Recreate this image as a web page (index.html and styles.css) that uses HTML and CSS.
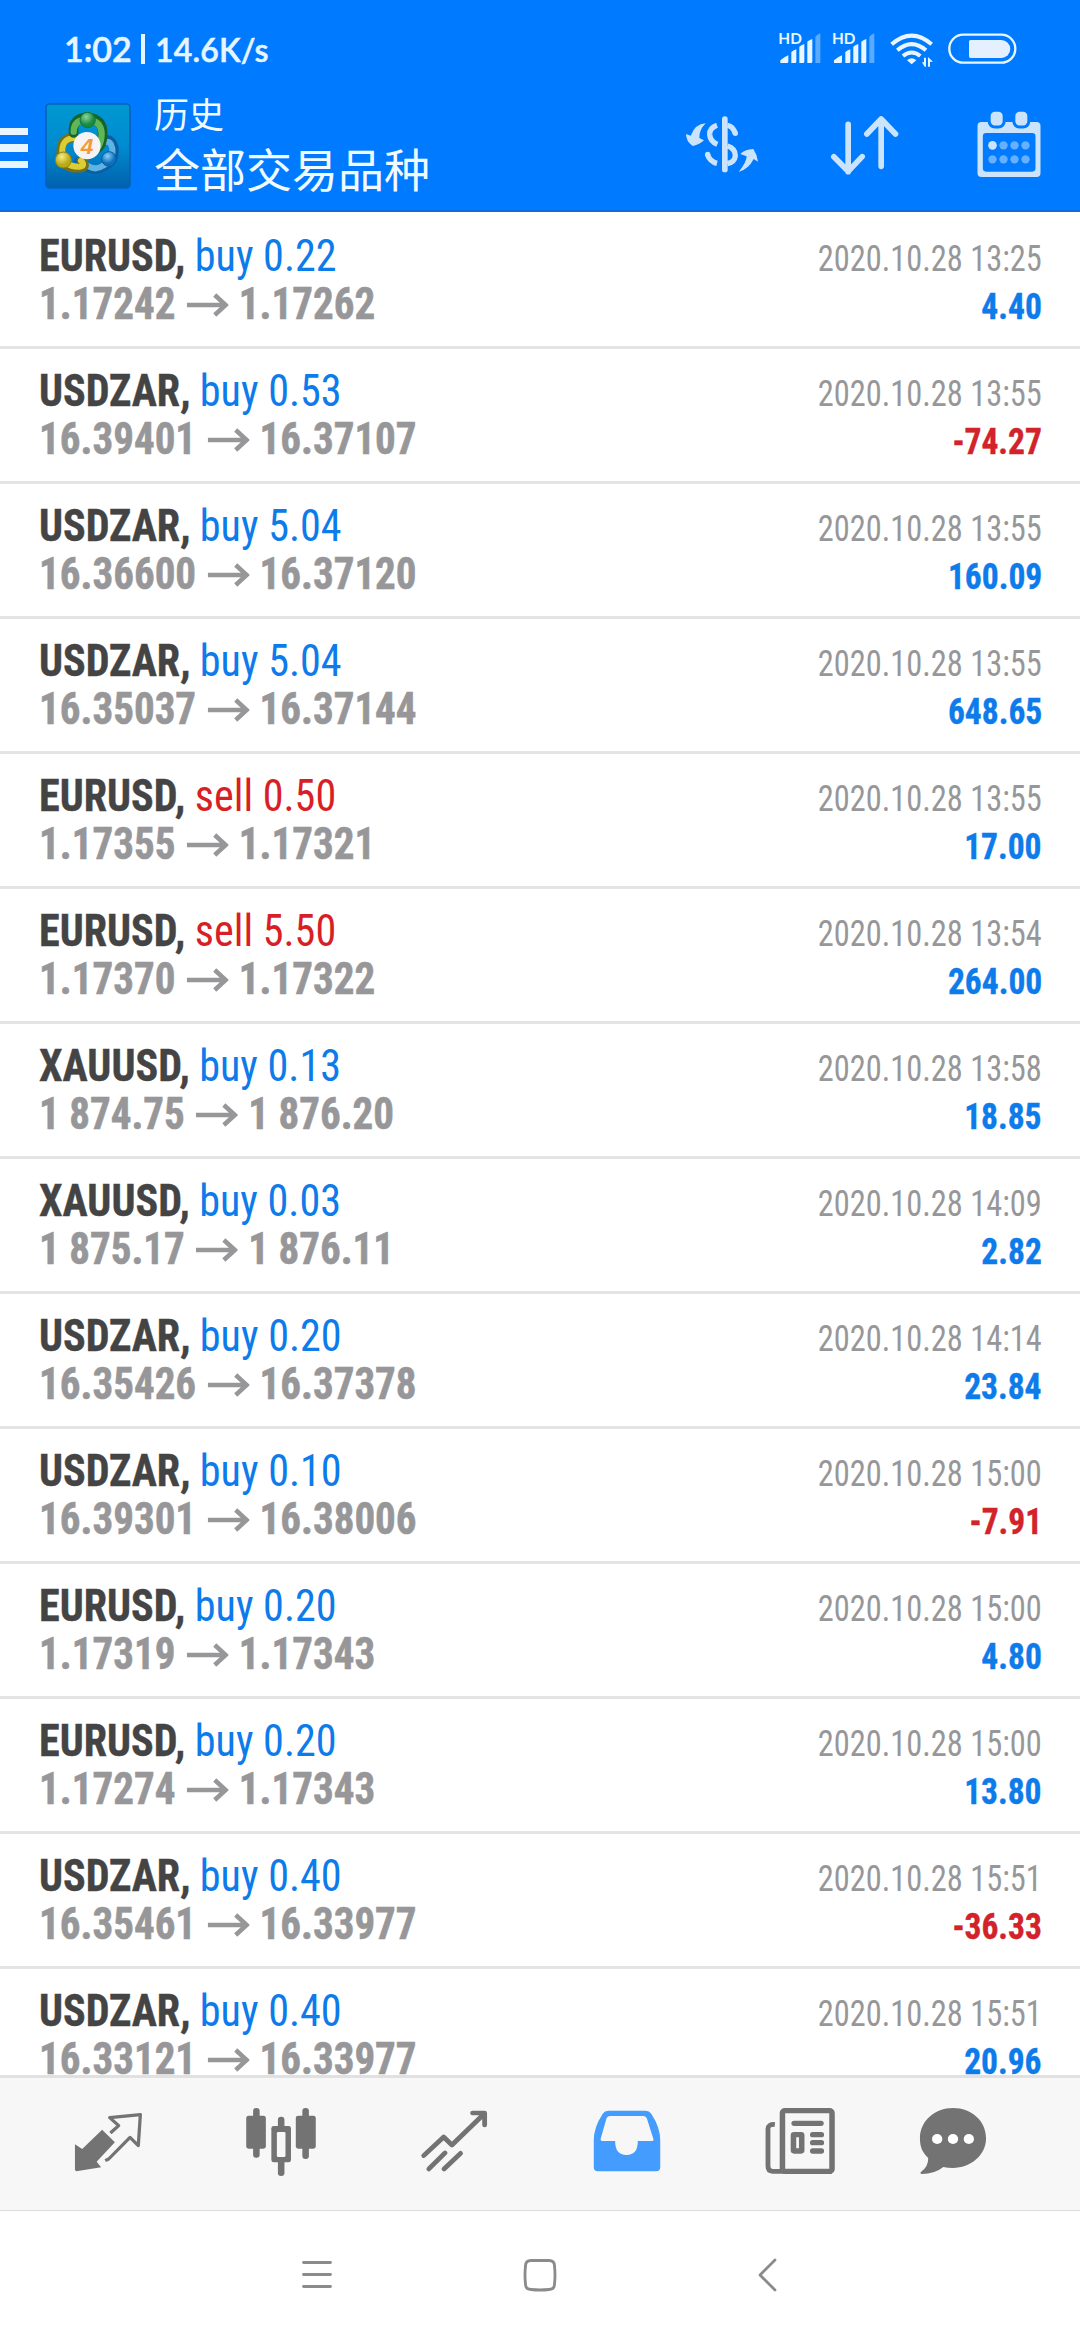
FILE: index.html
```html
<!DOCTYPE html>
<html lang="zh-CN">
<head>
<meta charset="utf-8">
<title>历史</title>
<link rel="stylesheet" href="styles.css">
</head>
<body>
<div class="app">
  <header class="top">
    <div class="status">
      <div class="status-text"><span class="clock">1:02</span><i class="bar"></i><span class="speed">14.6K/s</span></div>
      <svg class="status-icons" viewBox="350 90 724 120" fill="#eaf6ff">
        <text class="hd" x="354" y="132">HD</text>
        <path d="M360 189v-8q9-9 24-15v19q0 4-4 4zM393 189v-33q5-5 15-8v37q0 4-4 4zM417 189v-49q5-5 15-8v53q0 4-4 4zM441 189v-64q5-5 15-8v68q0 4-4 4z"/>
        <path d="M465 189v-79q5-6 15-10v89z" fill="#5aaaff"/>
        <text class="hd" x="515" y="132">HD</text>
        <path d="M521 189v-8q9-9 24-15v19q0 4-4 4zM555 189v-33q5-5 15-8v37q0 4-4 4zM579 189v-49q5-5 15-8v53q0 4-4 4zM603 189v-64q5-5 15-8v68q0 4-4 4z"/>
        <path d="M627 189v-79q5-6 15-10v89z" fill="#5aaaff"/>
        <g fill="none" stroke="#eaf6ff" stroke-width="12">
          <path d="M694 133Q754 81 814 133M711 151Q754 114 797 151M728 168Q754 147 780 168"/>
        </g>
        <path d="M740 181q14-13 28 0l-14 12zM793 200l-8-13h6v-14h6v27zM803 200v-29l15 14h-9v15z"/>
        <rect x="867" y="104" width="198" height="84" rx="42" fill="none" stroke="#eaf6ff" stroke-width="7"/>
        <path d="M931 120h92a27 27 0 0 1 0 54h-92q-5 0-5-5v-44q0-5 5-5z" fill="#e5f0ff"/>
      </svg>
    </div>
    <div class="toolbar">
      <div class="menu"><i></i><i></i><i></i></div>
      <svg class="logo" viewBox="46 40 258 258">
        <defs>
          <linearGradient id="bg" x1="0" y1="0" x2="0" y2="1"><stop offset="0" stop-color="#0098d2"/><stop offset=".5" stop-color="#008bd0"/><stop offset="1" stop-color="#0061ad"/></linearGradient>
          <radialGradient id="gr" cx=".4" cy=".3"><stop offset="0" stop-color="#8ed69a"/><stop offset="1" stop-color="#168b42"/></radialGradient>
          <radialGradient id="ye" cx=".4" cy=".3"><stop offset="0" stop-color="#f7ee83"/><stop offset="1" stop-color="#b9aa16"/></radialGradient>
          <radialGradient id="bl" cx=".4" cy=".3"><stop offset="0" stop-color="#8bd0f5"/><stop offset="1" stop-color="#0b70bd"/></radialGradient>
        </defs>
        <rect x="49" y="43" width="252" height="252" rx="10" fill="url(#bg)" stroke="#0662ba" stroke-width="5"/>
        <g fill="none" stroke-linecap="round">
          <path d="M147 215Q190 254 222 232Q257 218 254 177Q248 145 226 150" stroke="#0b5f9f" stroke-width="26"/>
          <path d="M153 211Q190 250 220 228Q252 213 248 176Q243 152 228 157" stroke="#5fb4e5" stroke-width="18"/>
          <path d="M134 144Q91 143 94 192Q99 239 151 235Q176 231 154 213" stroke="#766f14" stroke-width="27"/>
          <path d="M134 145Q95 146 98 191Q105 234 151 231Q168 228 154 213" stroke="#dccd35" stroke-width="18"/>
          <path d="M132 130Q127 85 172 83Q219 88 219 130Q219 168 203 176" stroke="#176329" stroke-width="29"/>
          <path d="M132 126Q132 91 172 89Q213 92 216 130Q216 155 206 171" stroke="#5db758" stroke-width="19"/>
        </g>
        <circle cx="174" cy="91" r="23" fill="url(#gr)" stroke="#17733a" stroke-width="3"/>
        <circle cx="101" cy="211" r="24" fill="url(#ye)" stroke="#8d8316" stroke-width="3"/>
        <circle cx="238" cy="208" r="22" fill="url(#bl)" stroke="#105a9c" stroke-width="3"/>
        <circle cx="172" cy="168" r="41" fill="#f5f3f5"/>
        <text class="four" x="172" y="193" text-anchor="middle">4</text>
      </svg>
      <div class="titles"><div class="title-small">历史</div><div class="title-big">全部交易品种</div></div>
      <div class="actions">
        <svg viewBox="42 291 288 288" fill="#cce4fb">
          <path d="M137 370Q105 372 92 407L78 402Q78 424 98 438Q120 433 132 421L118 414Q117 390 137 370zM236 516Q260 486 260 469L241 462Q253 448 280 447Q291 463 294 485L281 477Q266 507 236 516z"/>
          <rect x="186" y="349" width="17" height="168" rx="8"/>
          <path d="M171 376Q148 384 149 404Q151 424 172 433M202 376Q218 378 226 400M202 438Q226 445 226 467Q224 486 202 491M142 463Q150 485 171 490" fill="none" stroke="#cce4fb" stroke-width="16"/>
          <circle cx="226" cy="400" r="8"/><circle cx="143" cy="463" r="8"/>
        </svg>
        <svg viewBox="472.500 291 288 288" fill="none" stroke="#cce4fb" stroke-width="17" stroke-linecap="round" stroke-linejoin="round"><path d="M566 373V515M523 470L566 514L608 470M665 499V357M622 402L665 357L708 402"/></svg>
        <svg viewBox="901.500 291 288 288" fill="#cce4fb">
          <path fill-rule="evenodd" d="M963 366H1128Q1140 366 1140 378V519Q1140 531 1128 531H963Q951 531 951 519V378Q951 366 963 366zM977 399Q967 399 967 409V505Q967 515 977 515H1115Q1125 515 1125 505V409Q1125 399 1115 399z"/>
          <g stroke="#007bff" stroke-width="9"><rect x="986" y="331" width="45" height="50" rx="17"/><rect x="1060" y="331" width="45" height="50" rx="17"/></g>
          <circle cx="996" cy="436" r="13"/>
          <g fill="#66b0ff"><circle cx="1029" cy="436" r="12.500"/><circle cx="1062" cy="436" r="12.500"/><circle cx="1095" cy="436" r="12.500"/><circle cx="996" cy="478" r="12.500"/><circle cx="1029" cy="478" r="12.500"/><circle cx="1062" cy="478" r="12.500"/><circle cx="1095" cy="478" r="12.500"/></g>
        </svg>
      </div>
    </div>
  </header>
  <main class="list" id="list"></main>
  <nav class="tabs">
    <svg preserveAspectRatio="none" viewBox="192 183 244 244" fill="#737373"><path d="M297 269L334 307L281 365L294 382L222 394L218 390V313L239 327z"/><path d="M321 279L345 257L319 233L408 224L402 317L378 292L316 357L306 362" fill="none" stroke="#737373" stroke-width="9.500" stroke-linejoin="round"/></svg>
    <svg preserveAspectRatio="none" viewBox="694 183 244 244" fill="#737373"><rect x="735" y="204" width="19" height="149" rx="9"/><rect x="715" y="227" width="57" height="99" rx="7"/><rect x="878" y="204" width="19" height="153" rx="9"/><rect x="859" y="227" width="58" height="99" rx="7"/><rect x="807" y="230" width="19" height="178" rx="9"/><rect x="788" y="258" width="57" height="109" rx="7"/><rect x="804" y="276" width="25" height="75" rx="4" fill="#f7f7f7"/></svg>
    <svg preserveAspectRatio="none" viewBox="1196 183 244 244" fill="none" stroke="#737373" stroke-width="14" stroke-linecap="round" stroke-linejoin="round"><path d="M1230 347L1288 291L1312 315L1405 222M1372 219H1407V255M1245 387L1292 339M1289 387L1337 340"/></svg>
    <svg preserveAspectRatio="none" viewBox="132.500 183 244 244"><path fill="#459cff" fill-rule="evenodd" d="M200 212H309Q319 212 325 221Q351 262 351 300V382Q351 394 339 394H170Q158 394 158 382V300Q158 262 184 221Q190 212 200 212zM206 228Q198 228 195 235L178 296Q177 303 184 303H220Q220 345 253 345Q286 345 286 303H326Q333 303 331 296L312 235Q309 228 301 228z"/></svg>
    <svg preserveAspectRatio="none" viewBox="635 183 244 244" fill="none" stroke="#737373" stroke-width="16"><rect x="706" y="212" width="144" height="182" rx="7"/><path d="M850 394H677Q664 394 664 379V267Q664 252 684 253" stroke-width="14"/><path d="M740 250H818M794 284H819M794 308H819M794 333H819" stroke-linecap="round"/><rect x="738" y="284" width="24" height="49" rx="2"/></svg>
    <svg preserveAspectRatio="none" viewBox="1077 183 244 244" fill="#737373"><path d="M1199 204C1253 204 1295 243 1295 295C1295 347 1249 384 1199 384Q1183 384 1171 381Q1146 402 1108 402Q1103 402 1105 397Q1128 380 1127 354C1109 337 1103 319 1103 295C1103 243 1146 204 1199 204z"/><g fill="#fff"><circle cx="1153" cy="297" r="15"/><circle cx="1199" cy="297" r="15"/><circle cx="1245" cy="297" r="15"/></g></svg>
  </nav>
  <footer class="system">
    <svg viewBox="0 0 36 36"><path d="M4.500 5.500H31.500M4.500 17.500H31.500M4.500 29.500H31.500"/></svg>
    <svg viewBox="0 0 36 36"><path d="M9 3.500H27Q32.500 3.500 32.500 9Q33.500 18 32.500 27Q32.500 32.500 27 32.500Q18 33.500 9 32.500Q3.500 32.500 3.500 27Q2.500 18 3.500 9Q3.500 3.500 9 3.500z"/></svg>
    <svg viewBox="0 0 36 36"><path d="M26 3L11 18L26 33"/></svg>
  </footer>
</div>
<script src="app.js"></script>
</body>
</html>
```
FILE: app.js
```js
const deals = [
  ['EURUSD', 'buy', '0.22', '1.17242', '1.17262', '13:25', '4.40'],
  ['USDZAR', 'buy', '0.53', '16.39401', '16.37107', '13:55', '-74.27'],
  ['USDZAR', 'buy', '5.04', '16.36600', '16.37120', '13:55', '160.09'],
  ['USDZAR', 'buy', '5.04', '16.35037', '16.37144', '13:55', '648.65'],
  ['EURUSD', 'sell', '0.50', '1.17355', '1.17321', '13:55', '17.00'],
  ['EURUSD', 'sell', '5.50', '1.17370', '1.17322', '13:54', '264.00'],
  ['XAUUSD', 'buy', '0.13', '1 874.75', '1 876.20', '13:58', '18.85'],
  ['XAUUSD', 'buy', '0.03', '1 875.17', '1 876.11', '14:09', '2.82'],
  ['USDZAR', 'buy', '0.20', '16.35426', '16.37378', '14:14', '23.84'],
  ['USDZAR', 'buy', '0.10', '16.39301', '16.38006', '15:00', '-7.91'],
  ['EURUSD', 'buy', '0.20', '1.17319', '1.17343', '15:00', '4.80'],
  ['EURUSD', 'buy', '0.20', '1.17274', '1.17343', '15:00', '13.80'],
  ['USDZAR', 'buy', '0.40', '16.35461', '16.33977', '15:51', '-36.33'],
  ['USDZAR', 'buy', '0.40', '16.33121', '16.33977', '15:51', '20.96']
];
const arrow = '<svg class="arrow" viewBox="0 0 42 24" preserveAspectRatio="none"><path d="M0 12H39M28 2L39 12L28 22"/></svg>';
document.getElementById('list').innerHTML = deals.map(([symbol, side, lots, open, close, time, profit]) => `
  <section class="deal">
    <div class="line"><div class="left"><b class="symbol">${symbol},</b><span class="${side}">${side} ${lots}</span></div><span class="date">2020.10.28 ${time}</span></div>
    <div class="line"><div class="prices"><span>${open}</span>${arrow}<span>${close}</span></div><b class="profit${profit[0] === '-' ? ' loss' : ''}">${profit}</b></div>
  </section>`).join('');
```
FILE: styles.css
```css
* { box-sizing: border-box; }
body { margin: 0; background: #fff; }
svg { display: block; flex: none; }
.app { width: 1080px; height: 2340px; display: flex; flex-direction: column; overflow: hidden; font-family: "Roboto Condensed", Roboto, "Noto Sans CJK SC", sans-serif; font-stretch: 75%; }
.top { height: 212px; background: #007bff; border-bottom: 2px solid #1468d8; flex: none; }
.status { height: 97px; padding: 30px 22px 0 64px; display: flex; justify-content: space-between; align-items: flex-start; }
.status-text { display: flex; align-items: baseline; height: 44px; margin-top: -3px; font-family: Lato, sans-serif; font-stretch: 100%; color: #e6f5ff; font-weight: 600; line-height: 44px; -webkit-text-stroke: .5px #e6f5ff; }
.clock { font-size: 34px; width: 77px; }
.bar { flex: none; width: 4px; height: 30px; background: #e6f5ff; margin-right: 10px; align-self: center; }
.speed { font-size: 32px; letter-spacing: .2px; }
.status-icons { width: 241.300px; height: 40px; margin-right: 40px; }
.hd { font: 700 46px Lato, sans-serif; }
.toolbar { height: 113px; display: flex; }
.menu { width: 45px; padding-top: 30.500px; display: flex; flex-direction: column; gap: 9px; }
.menu i { width: 28px; height: 7.500px; background: #e6f5ff; }
.logo { width: 86px; height: 86px; margin-top: 6px; }
.four { font: italic 700 68px "Liberation Sans", sans-serif; fill: #f59a37; }
.titles { margin-left: 23px; margin-top: -5px; flex: 1; color: #f0faff; font-family: "Noto Sans CJK SC", sans-serif; font-stretch: 100%; }
.title-small { font-size: 35px; line-height: 42px; }
.title-big { font-size: 46px; line-height: 60px; margin-top: 3px; }
.actions { display: flex; gap: 47.500px; padding-right: 23.500px; }
.actions svg { width: 96px; height: 96px; }
.list { height: 1863px; padding-top: 2px; overflow: hidden; flex: none; }
.deal { height: 135px; padding: 18px 38px 0 39px; border-bottom: 3px solid #e4e4e4; }
.line { height: 48px; line-height: 48px; display: flex; justify-content: space-between; align-items: baseline; white-space: nowrap; }
.left { font-size: 45px; display: flex; gap: 10px; transform: scaleX(.936); transform-origin: left; }
.symbol { color: #444; -webkit-text-stroke: .4px #444; }
.buy { color: #0d7bea; }
.sell { color: #d81f26; }
.date { font-size: 37px; color: #97979a; transform: scaleX(.876); transform-origin: right; }
.prices { font-size: 45px; font-weight: 700; color: #97979a; display: flex; transform: scaleX(.912); transform-origin: left; -webkit-text-stroke: .6px #97979a; }
.arrow { width: 46px; height: 24px; margin: 13px 11px 0 12.500px; fill: none; stroke: #97979a; stroke-width: 4.500; }
.profit { font-size: 37px; color: #0d7bea; transform: scaleX(.905); transform-origin: right; -webkit-text-stroke: .4px currentColor; }
.profit.loss { color: #d2222a; }
.tabs { height: 136px; flex: none; background: #f7f7f7; border-top: 3px solid #e1e1e1; border-bottom: 1px solid #dcdcdc; display: flex; gap: 89px; padding: 23px 0 0 66px; }
.tabs svg { width: 84px; height: 81.300px; }
.tabs svg:last-child { margin-left: -20px; }
.system { flex: 1; display: flex; padding: 46px 0 0 299px; gap: 187px; }
.system svg { width: 36px; height: 36px; fill: none; stroke: #8b8b8b; stroke-width: 2.800; stroke-linecap: round; stroke-linejoin: round; }
.system svg:last-child { margin-left: 4px; }
```
